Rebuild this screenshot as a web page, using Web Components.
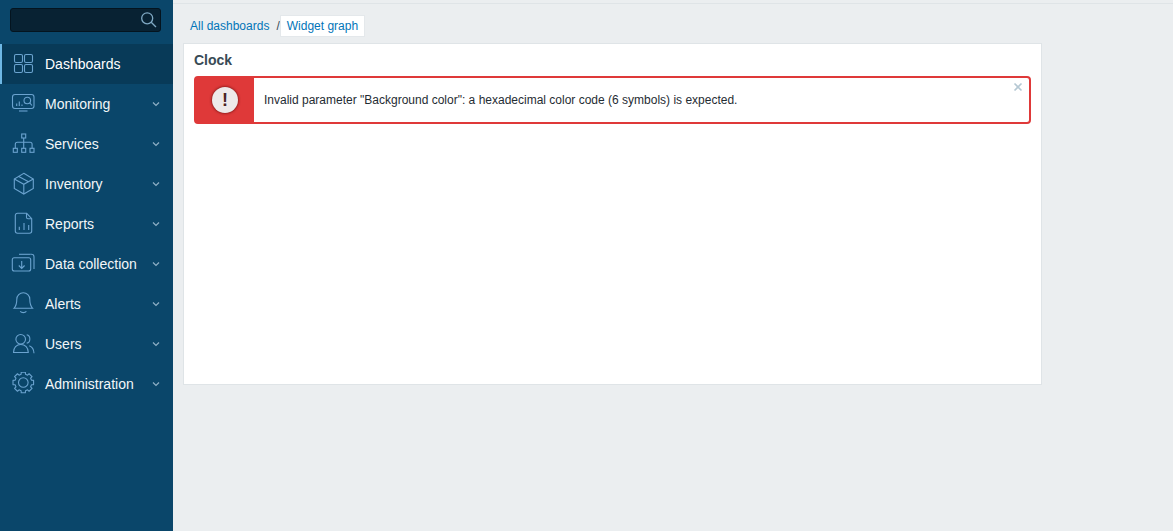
<!DOCTYPE html>
<html>
<head>
<meta charset="utf-8">
<style>
  html, body { margin: 0; height: 100%; }
  body { font-family: "Liberation Sans", Arial, sans-serif; background: #ebeef0; overflow: hidden; }
  app-shell { height: 531px; }
</style>
</head>
<body>
<app-shell>
  <side-nav slot="nav">
    <search-box></search-box>
    <nav-item label="Dashboards" icon="dashboards" active></nav-item>
    <nav-item label="Monitoring" icon="monitoring"></nav-item>
    <nav-item label="Services" icon="services"></nav-item>
    <nav-item label="Inventory" icon="inventory"></nav-item>
    <nav-item label="Reports" icon="reports"></nav-item>
    <nav-item label="Data collection" icon="data"></nav-item>
    <nav-item label="Alerts" icon="alerts"></nav-item>
    <nav-item label="Users" icon="users"></nav-item>
    <nav-item label="Administration" icon="admin"></nav-item>
  </side-nav>
  <bread-crumbs></bread-crumbs>
  <widget-panel title-text="Clock">
    <error-box>Invalid parameter "Background color": a hexadecimal color code (6 symbols) is expected.</error-box>
  </widget-panel>
</app-shell>

<script>
// 8 tooth gear outline for the administration icon
function gearPath(cx, cy, outer, inner) {
  let d = "";
  for (let i = 0; i < 8; i++) {
    const a = i * Math.PI / 4 - Math.PI / 2;
    const pts = [[inner, a - 0.26], [outer, a - 0.2], [outer, a + 0.2], [inner, a + 0.26]];
    for (const [r, t] of pts) {
      d += (d ? "L" : "M") + (cx + r * Math.cos(t)).toFixed(2) + " " + (cy + r * Math.sin(t)).toFixed(2);
    }
  }
  return d + "z";
}

const ICONS = {
  dashboards: `<rect x="3.500" y="2.500" width="8" height="8" rx="1.500"/><rect x="13.500" y="2.500" width="8" height="8" rx="1.500"/><rect x="3.500" y="12.500" width="8" height="8" rx="1.500"/><rect x="13.500" y="12.500" width="8" height="8" rx="1.500"/>`,
  monitoring: `<rect x="1.500" y="2.500" width="21.500" height="14" rx="2.500"/><path d="M8 19h8.500"/><path d="M5.700 14v-2.500M8.300 14V9.500M11 14v-1.500"/><circle cx="16.300" cy="8.500" r="3.300"/><path d="M18.700 10.900l2.300 2.600"/>`,
  services: `<rect x="10.700" y="2" width="4" height="4"/><path d="M12.700 6v10.300M4.300 16.300v-4a2 2 0 0 1 2-2h12.800a2 2 0 0 1 2 2v4"/><rect x="2.300" y="16.300" width="4" height="4"/><rect x="10.700" y="16.300" width="4" height="4"/><rect x="19" y="16.300" width="4" height="4"/>`,
  inventory: `<path d="M12.800 1.300l9.500 5.700v9.500l-9.500 5.500-9.500-5.500V7z"/><path d="M3.300 7l9.500 5.300L22.300 7M12.800 12.300V22M7.300 4.300l10.200 5.500"/>`,
  reports: `<path d="M6.500 1.300h9.200l5 5.400v12.400a2.200 2.200 0 0 1-2.200 2.200h-12a2.200 2.200 0 0 1-2.200-2.200V3.500a2.200 2.200 0 0 1 2.200-2.200z"/><path d="M15.500 1.500v3.700a1.500 1.500 0 0 0 1.500 1.500h3.700"/><path d="M8.300 18v-3.300M13 18v-7M17.700 18v-5"/>`,
  data: `<rect x="1.300" y="5.700" width="18.400" height="13.300" rx="2"/><path d="M8 2.300h11.500"/><path d="M19.500 2.300h1a2.500 2.500 0 0 1 2.500 2.500v12.200"/><path d="M10.700 9v7.300M7.800 13.500l2.900 2.900 2.900-2.900"/>`,
  alerts: `<path d="M12.300 .8a6.500 6.500 0 0 0-6.500 6.500c0 4.200-.6 6.800-2.800 9h18.600c-2.200-2.200-2.800-4.800-2.800-9A6.500 6.500 0 0 0 12.300 .8z"/><path d="M9.200 19.300c1.500 1.700 4.700 1.700 6.200 0"/>`,
  users: `<circle cx="9.700" cy="7.300" r="4.800"/><path d="M2.500 20.500c0-4.800 3-8 7.300-8s7.500 3.200 7.500 8z"/><path d="M15.700 2.800c4.200.8 4.200 7.600 0 8.300M18.300 13.700c2.800 1 4.500 3.800 4.700 7.500"/>`,
  admin: `<circle cx="12.300" cy="10.500" r="4.800"/><path stroke-linejoin="round" d="${gearPath(12.300, 10.500, 10.500, 8.500)}"/>`
};

class AppShell extends HTMLElement {
  constructor() {
    super();
    this.attachShadow({ mode: "open" });
    this.shadowRoot.innerHTML = `
      <style>
        :host { display: grid; grid-template-columns: 173px 1fr; }
        main { padding: 3px 0 0; min-width: 0; }
        .inner { border-top: 1px solid #dfe4e7; padding: 11px 131px 0 10px; }
      </style>
      <slot name="nav"></slot>
      <main><div class="inner"><slot></slot></div></main>
    `;
  }
}

class SideNav extends HTMLElement {
  constructor() {
    super();
    this.attachShadow({ mode: "open" });
    this.shadowRoot.innerHTML = `
      <style>
        :host { display: block; background: #0a466a; height: 100%; padding-top: 8px; box-sizing: border-box; }
      </style>
      <slot></slot>
    `;
  }
}

class SearchBox extends HTMLElement {
  constructor() {
    super();
    this.attachShadow({ mode: "open" });
    this.shadowRoot.innerHTML = `
      <style>
        :host { display: flex; justify-content: flex-end; align-items: center; box-sizing: border-box;
          width: 151px; height: 24px; margin: 0 0 12px 10px; padding-right: 3px;
          background: #082233; border: 1px solid #04141f; border-radius: 3px; }
        svg { fill: none; stroke: #7fa9c4; stroke-width: 1.3; }
      </style>
      <svg width="18" height="18" viewBox="0 0 18 18"><circle cx="8.200" cy="7.300" r="5.500"/><path d="M12.200 11.200l4.800 4.800"/></svg>
    `;
  }
}

class NavItem extends HTMLElement {
  constructor() {
    super();
    this.attachShadow({ mode: "open" });
  }
  connectedCallback() {
    const active = this.hasAttribute("active");
    this.shadowRoot.innerHTML = `
      <style>
        :host { display: flex; align-items: center; height: 40px; box-sizing: border-box;
          padding-left: 11px; color: #f2f6f8; font-size: 14px; }
        :host([active]) { background: #083a58; border-left: 2px solid #6eb7e4; padding-left: 9px; color: #fff; }
        .icon { width: 24px; height: 24px; margin-right: 10px; fill: none; stroke: #6ba3cf; stroke-width: 1.100; flex: none; }
        .label { flex: 1; }
        .chev { width: 8px; height: 6px; margin-right: 13px; fill: none; stroke: #8fb0c6; stroke-width: 1.200; }
      </style>
      <svg class="icon" viewBox="0 0 24 24">${ICONS[this.getAttribute("icon")]}</svg>
      <span class="label">${this.getAttribute("label")}</span>
      ${active ? "" : `<svg class="chev" viewBox="0 0 8 6"><path d="M1 1.500l3 3 3-3"/></svg>`}
    `;
  }
}

class BreadCrumbs extends HTMLElement {
  constructor() {
    super();
    this.attachShadow({ mode: "open" });
    this.shadowRoot.innerHTML = `
      <style>
        :host { display: flex; align-items: center; height: 22px; margin-bottom: 6px; font-size: 12px; color: #0275b8; }
        a { color: inherit; text-decoration: none; padding: 0 7px; }
        .sep { color: #384a55; }
        .cur { background: #fff; line-height: 20px; border: 1px solid #e4e8eb; box-sizing: border-box; height: 22px; padding: 0 6px; display: block; }
      </style>
      <a href="#">All dashboards</a><span class="sep">/</span><a class="cur" href="#">Widget graph</a>
    `;
  }
}

class WidgetPanel extends HTMLElement {
  constructor() {
    super();
    this.attachShadow({ mode: "open" });
  }
  connectedCallback() {
    this.shadowRoot.innerHTML = `
      <style>
        :host { display: block; box-sizing: border-box; height: 342px; background: #fff; border: 1px solid #dfe4e7; padding: 0 10px; }
        h2 { margin: 0; height: 32px; line-height: 32px; font-size: 14px; font-weight: bold; color: #384a55; }
      </style>
      <h2>${this.getAttribute("title-text")}</h2>
      <slot></slot>
    `;
  }
}

class ErrorBox extends HTMLElement {
  constructor() {
    super();
    this.attachShadow({ mode: "open" });
    this.shadowRoot.innerHTML = `
      <style>
        :host { display: flex; position: relative; box-sizing: border-box; height: 48px; border: 2px solid #df3939; border-radius: 4px; font-size: 12px; color: #1f2c33; background: #fff; }
        .side { width: 58px; background: #df3939; display: flex; align-items: center; justify-content: center; flex: none; }
        .badge { width: 26px; height: 26px; border-radius: 50%; background: #eee9e9; box-shadow: 0 0 3px rgba(70,0,0,.9); color: #4a2323;
          display: flex; align-items: center; justify-content: center; font-size: 18px; font-weight: bold; }
        .msg { display: flex; align-items: center; padding-left: 10px; }
        .close { position: absolute; top: 4px; right: 6px; width: 10px; height: 10px; stroke: #b5c8d3; stroke-width: 1.600; }
      </style>
      <div class="side"><div class="badge">!</div></div>
      <div class="msg"><slot></slot></div>
      <svg class="close" viewBox="0 0 10 10"><path d="M1.500 1.500l7 7M8.500 1.500l-7 7"/></svg>
    `;
  }
}

customElements.define("app-shell", AppShell);
customElements.define("side-nav", SideNav);
customElements.define("search-box", SearchBox);
customElements.define("nav-item", NavItem);
customElements.define("bread-crumbs", BreadCrumbs);
customElements.define("widget-panel", WidgetPanel);
customElements.define("error-box", ErrorBox);
</script>
</body>
</html>
